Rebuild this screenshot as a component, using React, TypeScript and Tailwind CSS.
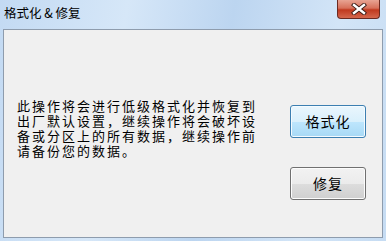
const CloseIcon = () => (
  <svg width="16" height="12" viewBox="0 0 16 12">
    <path d="M3 2 L13 10 M13 2 L3 10" stroke="#3a1a14" strokeWidth="4.2" strokeLinecap="square" />
    <path d="M3 2 L13 10 M13 2 L3 10" stroke="#ffffff" strokeWidth="2.4" strokeLinecap="square" />
  </svg>
);

const App = () => {
  return (
    <div className="w-[386px] h-[241px] overflow-hidden bg-[linear-gradient(100deg,#c3daf3_0%,#d6e7f8_30%,#bcd5f0_55%,#d3e5f7_80%,#c6dcf3_100%)] px-[3px] pb-[3px] flex flex-col font-['Noto_Sans_CJK_SC',sans-serif]">
      <div className="h-[29px] flex items-start relative">
        <span className="mt-[5px] ml-[1px] text-[12.5px] leading-[16px] text-black">格式化 &amp; 修复</span>
        <button className="absolute right-[3px] top-0 w-[43px] h-[19px] rounded-b-[4px] border border-t-0 border-[#6b2a21] bg-[linear-gradient(#e8a493_0%,#d7705a_45%,#c0391f_55%,#d4674d_100%)] flex items-center justify-center">
          <CloseIcon />
        </button>
      </div>
      <div className="flex-1 border border-[#8e9cad] bg-[#f0f0f0] flex">
        <div className="flex-1 pl-[13px] pt-[68px]">
          <p className="text-[13px] leading-[15px] tracking-[2px] text-black">
            此操作将会进行低级格式化并恢复到
            <br />
            出厂默认设置，继续操作将会破坏设
            <br />
            备或分区上的所有数据，继续操作前
            <br />
            请备份您的数据。
          </p>
        </div>
        <div className="w-[92px] pt-[75px] flex flex-col gap-[29px]">
          <button className="w-[76px] h-[33px] rounded-[3px] border border-[#3c7fb1] bg-[linear-gradient(#eaf6fd_0%,#d9f0fc_50%,#bee6fd_51%,#a7d9f5_100%)] shadow-[inset_0_0_0_1px_#f4fbff] text-[14px] tracking-[1px] text-black">
            格式化
          </button>
          <button className="w-[76px] h-[33px] rounded-[3px] border border-[#707070] bg-[linear-gradient(#f2f2f2_0%,#ebebeb_50%,#dddddd_51%,#cfcfcf_100%)] shadow-[inset_0_0_0_1px_#fcfcfc] text-[14px] tracking-[1px] text-black">
            修复
          </button>
        </div>
      </div>
    </div>
  );
};

export default App;
